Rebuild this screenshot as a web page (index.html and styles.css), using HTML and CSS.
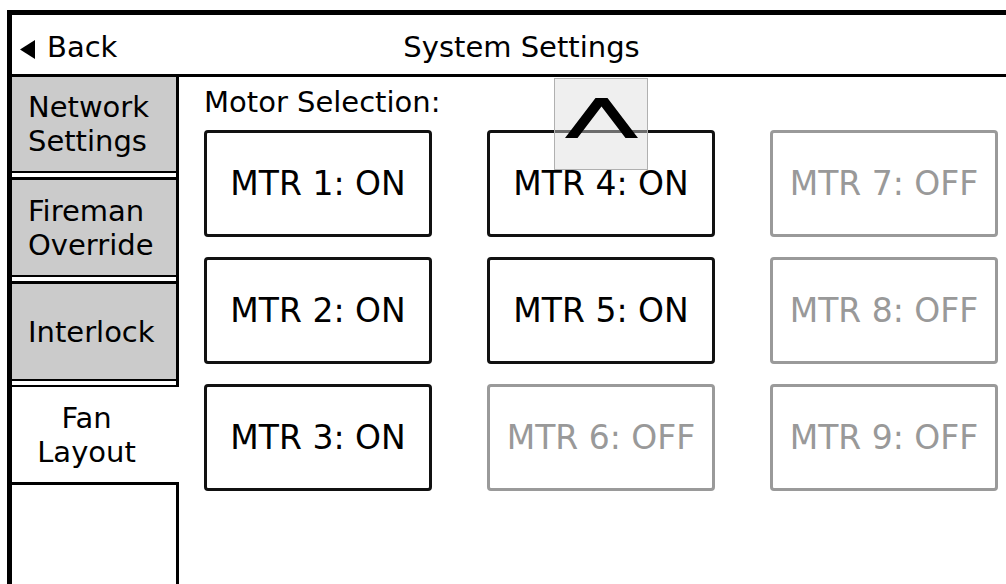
FILE: index.html
```html
<!DOCTYPE html>
<html lang="en">
<head>
<meta charset="utf-8">
<title>System Settings</title>
<link rel="stylesheet" href="styles.css">
</head>
<body>
<div class="frame">
  <header class="header">
    <div class="back">
      <svg class="back-arrow" width="15" height="19" viewBox="0 0 15 19"><polygon points="15,0 15,19 0,9.5" fill="#000"/></svg>
      <span>Back</span>
    </div>
    <div class="title">System Settings</div>
    <div></div>
  </header>
  <div class="main">
    <nav class="sidebar">
      <div class="tab tab-first">Network<br>Settings</div>
      <div class="tab">Fireman<br>Override</div>
      <div class="tab">Interlock</div>
      <div class="tab tab-selected">Fan<br>Layout</div>
    </nav>
    <section class="content">
      <div class="label">Motor Selection:</div>
      <div class="grid">
        <div class="mtr">MTR 1: ON</div>
        <div class="mtr">MTR 4: ON</div>
        <div class="mtr off">MTR 7: OFF</div>
        <div class="mtr">MTR 2: ON</div>
        <div class="mtr">MTR 5: ON</div>
        <div class="mtr off">MTR 8: OFF</div>
        <div class="mtr">MTR 3: ON</div>
        <div class="mtr off">MTR 6: OFF</div>
        <div class="mtr off">MTR 9: OFF</div>
      </div>
      <div class="scroll-up">
        <svg width="92" height="90" viewBox="0 0 92 90"><polygon points="40.5,19 52.5,19 83,59 70.5,59 46.5,27.5 22.5,59 10,59" fill="#000"/></svg>
      </div>
    </section>
  </div>
</div>
</body>
</html>
```
FILE: styles.css
```css
html, body {
  margin: 0;
  padding: 0;
  background: #fff;
  overflow: hidden;
}
body {
  width: 1006px;
  height: 584px;
  font-family: "DejaVu Sans", Verdana, sans-serif;
  color: #000;
}
.frame {
  margin: 10px 0 0 7px;
  width: 1019px;
  border-left: 5px solid #000;
  border-top: 5px solid #000;
}
.header {
  height: 62px;
  box-sizing: border-box;
  padding-top: 15px;
  border-bottom: 3px solid #000;
  display: grid;
  grid-template-columns: 1fr auto 1fr;
  align-items: start;
  font-size: 29px;
}
.back {
  display: flex;
  align-items: center;
  gap: 12px;
  padding-left: 8px;
}
.back-arrow {
  flex: none;
  margin-top: 4px;
}
.title {
  text-align: center;
}
.main {
  display: flex;
  height: 520px;
}
.sidebar {
  width: 167px;
  flex: none;
  box-sizing: border-box;
  border-right: 3px solid #000;
  display: flex;
  flex-direction: column;
  gap: 4px;
}
.tab {
  height: 100px;
  box-sizing: border-box;
  border-top: 3px solid #000;
  border-bottom: 2px solid #000;
  background: #cbcbcb;
  font-size: 29px;
  padding-left: 16px;
  display: flex;
  align-items: center;
}
.tab-first {
  height: 96px;
  border-top: none;
}
.tab-selected {
  background: #fff;
  margin-right: -3px;
  border-top: 2px solid #000;
  border-bottom: 3px solid #000;
  justify-content: center;
  text-align: center;
  padding-left: 0;
  padding-right: 18px;
}
.content {
  flex: 1;
  position: relative;
  padding: 8px 0 0 25px;
}
.label {
  font-size: 29px;
}
.grid {
  margin-top: 11px;
  display: grid;
  grid-template-columns: repeat(3, 228px);
  grid-auto-rows: 107px;
  column-gap: 55px;
  row-gap: 20px;
}
.mtr {
  box-sizing: border-box;
  border: 3px solid #111;
  border-radius: 4px;
  display: flex;
  align-items: center;
  justify-content: center;
  font-size: 33px;
  color: #000;
}
.mtr.off {
  border-color: #9a9a9a;
  color: #999;
}
.scroll-up {
  position: absolute;
  left: 375px;
  top: 1px;
  width: 94px;
  height: 92px;
  box-sizing: border-box;
  border: 1px solid #b0b0b0;
  background: rgba(220, 220, 220, 0.45);
}
.scroll-up svg {
  display: block;
}
```
